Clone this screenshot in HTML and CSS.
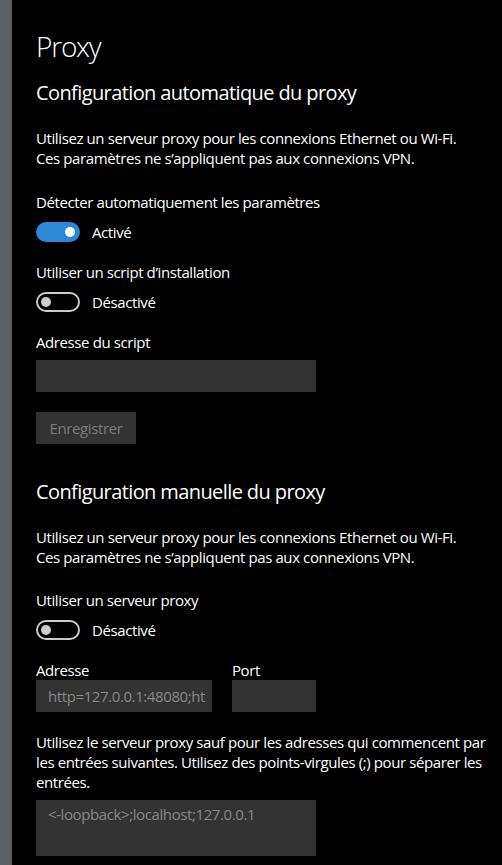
FILE: index.html
```html
<!DOCTYPE html>
<html>
<head>
  <title>Proxy</title>
  <link rel="stylesheet" href="styles.css">
</head>
<body>
  <div class="edge"></div>
  <div class="page">
    <h1 class="title">Proxy</h1>

    <h2 class="heading">Configuration automatique du proxy</h2>
    <p class="desc">
      Utilisez un serveur proxy pour les connexions Ethernet ou Wi-Fi.<br>
      Ces paramètres ne s’appliquent pas aux connexions VPN.
    </p>

    <div class="label first">Détecter automatiquement les paramètres</div>
    <div class="switch-row">
      <span class="switch on"><span class="knob"></span></span>
      <span class="state">Activé</span>
    </div>

    <div class="label">Utiliser un script d’installation</div>
    <div class="switch-row">
      <span class="switch"><span class="knob"></span></span>
      <span class="state">Désactivé</span>
    </div>

    <div class="label">Adresse du script</div>
    <div class="box wide"></div>

    <div class="button">Enregistrer</div>

    <h2 class="heading second">Configuration manuelle du proxy</h2>
    <p class="desc">
      Utilisez un serveur proxy pour les connexions Ethernet ou Wi-Fi.<br>
      Ces paramètres ne s’appliquent pas aux connexions VPN.
    </p>

    <div class="label first short">Utiliser un serveur proxy</div>
    <div class="switch-row">
      <span class="switch"><span class="knob"></span></span>
      <span class="state">Désactivé</span>
    </div>

    <div class="fields">
      <div class="field">
        <div class="field-label">Adresse</div>
        <div class="box address">http=127.0.0.1:48080;ht</div>
      </div>
      <div class="field">
        <div class="field-label">Port</div>
        <div class="box port"></div>
      </div>
    </div>

    <p class="desc except">
      Utilisez le serveur proxy sauf pour les adresses qui commencent par<br>
      les entrées suivantes. Utilisez des points-virgules (;) pour séparer les<br>
      entrées.
    </p>
    <div class="box wide area">&lt;-loopback&gt;;localhost;127.0.0.1</div>
  </div>
</body>
</html>
```

FILE: styles.css
```css
html, body {
    margin: 0;
    height: 100%;
}

body {
    display: flex;
    background-color: #000;
    color: #fff;
    font-family: "Open Sans", "Noto Sans", sans-serif;
    font-size: 15px;
    line-height: 20px;
    letter-spacing: -0.4px;
    overflow: hidden;
}

.edge {
    width: 12px;
    flex: none;
    background-color: #5d6165;
}

.page {
    padding: 28px 0 0 24px;
    flex: 1;
}

.title {
    margin: 0;
    font-size: 28px;
    line-height: 36px;
    font-weight: 300;
    letter-spacing: -1.2px;
}

.heading {
    margin: 15px 0 0 0;
    font-size: 20px;
    line-height: 28px;
    font-weight: 400;
    letter-spacing: -0.6px;
}

.heading.second {
    margin-top: 34px;
}

.desc {
    margin: 21px 0 0 0;
}

.desc.except {
    margin-top: 20px;
}

.label {
    margin-top: 20px;
}

.label.first {
    margin-top: 24px;
}

.label.short {
    margin-top: 23px;
}

.switch-row {
    display: flex;
    align-items: center;
    gap: 12px;
    margin-top: 10px;
    height: 20px;
}

.switch {
    box-sizing: border-box;
    width: 44px;
    height: 20px;
    border: 2px solid #cccccc;
    border-radius: 10px;
    display: flex;
    align-items: center;
    padding: 0 3px;
}

.switch .knob {
    width: 10px;
    height: 10px;
    border-radius: 50%;
    background-color: #cccccc;
}

.switch.on {
    border-color: #2b88d6;
    background-color: #2b88d6;
    justify-content: flex-end;
}

.switch.on .knob {
    background-color: #fff;
}

.box {
    box-sizing: border-box;
    height: 32px;
    background-color: #333333;
    color: #878787;
    padding: 0 12px;
    line-height: 32px;
    white-space: nowrap;
    overflow: hidden;
}

.box.wide {
    width: 280px;
    margin-top: 8px;
}

.button {
    width: 100px;
    height: 32px;
    margin-top: 20px;
    background-color: #333333;
    color: #7a7a7a;
    text-align: center;
    line-height: 32px;
}

.fields {
    display: flex;
    gap: 20px;
    margin-top: 20px;
}

.box.address {
    width: 176px;
    padding-right: 0;
}

.box.port {
    width: 84px;
}

.box.area {
    height: 56px;
    line-height: 20px;
    padding-top: 4px;
}
```
